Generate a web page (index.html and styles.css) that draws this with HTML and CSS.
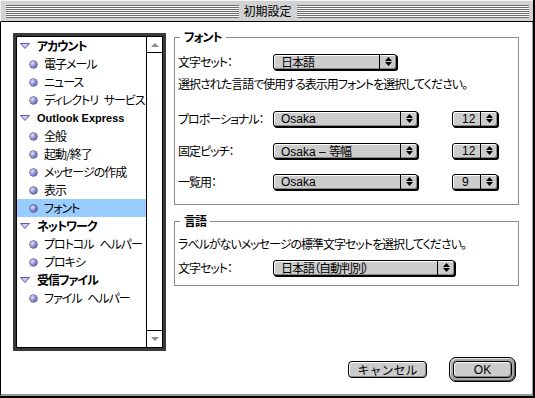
FILE: index.html
```html
<!DOCTYPE html>
<html>
<head>
    <meta charset="UTF-8">
    <title>初期設定</title>
    <link rel="stylesheet" href="styles.css">
</head>
<body>
<div class="window">
    <div class="titlebar">
        <div class="stripes"></div>
        <span class="title">初期設定</span>
        <div class="stripes"></div>
    </div>

    <div class="content">
        <div class="main">
            <div class="listbox">
                <ul class="tree">
                    <li class="head"><svg class="twisty" width="10" height="6" viewBox="0 0 10 6"><polygon points="0.5,0.5 9.5,0.5 5,5.5" fill="#c8c8f0" stroke="#5a5aaa"/></svg>アカウント</li>
                    <li class="leaf"><span class="dot"></span>電子メール</li>
                    <li class="leaf"><span class="dot"></span>ニュース</li>
                    <li class="leaf"><span class="dot"></span>ディレクトリ サービス</li>
                    <li class="head latin"><svg class="twisty" width="10" height="6" viewBox="0 0 10 6"><polygon points="0.5,0.5 9.5,0.5 5,5.5" fill="#c8c8f0" stroke="#5a5aaa"/></svg>Outlook Express</li>
                    <li class="leaf"><span class="dot"></span>全般</li>
                    <li class="leaf"><span class="dot"></span>起動/終了</li>
                    <li class="leaf"><span class="dot"></span>メッセージの作成</li>
                    <li class="leaf"><span class="dot"></span>表示</li>
                    <li class="leaf selected"><span class="dot"></span>フォント</li>
                    <li class="head"><svg class="twisty" width="10" height="6" viewBox="0 0 10 6"><polygon points="0.5,0.5 9.5,0.5 5,5.5" fill="#c8c8f0" stroke="#5a5aaa"/></svg>ネットワーク</li>
                    <li class="leaf"><span class="dot"></span>プロトコル ヘルパー</li>
                    <li class="leaf"><span class="dot"></span>プロキシ</li>
                    <li class="head"><svg class="twisty" width="10" height="6" viewBox="0 0 10 6"><polygon points="0.5,0.5 9.5,0.5 5,5.5" fill="#c8c8f0" stroke="#5a5aaa"/></svg>受信ファイル</li>
                    <li class="leaf"><span class="dot"></span>ファイル ヘルパー</li>
                </ul>
                <div class="scrollbar">
                    <div class="arrow up"><svg width="8" height="4" viewBox="0 0 8 4"><polygon points="4,0 8,4 0,4" fill="#8a8a8a"/></svg></div>
                    <div class="track"></div>
                    <div class="arrow down"><svg width="8" height="4" viewBox="0 0 8 4"><polygon points="0,0 8,0 4,4" fill="#8a8a8a"/></svg></div>
                </div>
            </div>

            <div class="panels">
                <fieldset class="group">
                    <legend>フォント</legend>
                    <div class="field first">
                        <span class="lbl">文字セット：</span>
                        <div class="popup w-charset"><span class="val">日本語</span><span class="arr"><svg width="7" height="9" viewBox="0 0 7 9"><polygon points="3.5,0 7,4 0,4" fill="#000"/><polygon points="0,5 7,5 3.5,9" fill="#000"/></svg></span></div>
                    </div>
                    <p class="desc">選択された言語で使用する表示用フォントを選択してください。</p>
                    <div class="field gap-a">
                        <span class="lbl">プロポーショナル：</span>
                        <div class="popup w-font"><span class="val latin">Osaka</span><span class="arr"><svg width="7" height="9" viewBox="0 0 7 9"><polygon points="3.5,0 7,4 0,4" fill="#000"/><polygon points="0,5 7,5 3.5,9" fill="#000"/></svg></span></div>
                        <div class="popup w-size"><span class="val latin">12</span><span class="arr"><svg width="7" height="9" viewBox="0 0 7 9"><polygon points="3.5,0 7,4 0,4" fill="#000"/><polygon points="0,5 7,5 3.5,9" fill="#000"/></svg></span></div>
                    </div>
                    <div class="field gap-b">
                        <span class="lbl">固定ピッチ：</span>
                        <div class="popup w-font"><span class="val"><span class="latin">Osaka – </span>等幅</span><span class="arr"><svg width="7" height="9" viewBox="0 0 7 9"><polygon points="3.5,0 7,4 0,4" fill="#000"/><polygon points="0,5 7,5 3.5,9" fill="#000"/></svg></span></div>
                        <div class="popup w-size"><span class="val latin">12</span><span class="arr"><svg width="7" height="9" viewBox="0 0 7 9"><polygon points="3.5,0 7,4 0,4" fill="#000"/><polygon points="0,5 7,5 3.5,9" fill="#000"/></svg></span></div>
                    </div>
                    <div class="field gap-c">
                        <span class="lbl">一覧用：</span>
                        <div class="popup w-font"><span class="val latin">Osaka</span><span class="arr"><svg width="7" height="9" viewBox="0 0 7 9"><polygon points="3.5,0 7,4 0,4" fill="#000"/><polygon points="0,5 7,5 3.5,9" fill="#000"/></svg></span></div>
                        <div class="popup w-size"><span class="val latin">9</span><span class="arr"><svg width="7" height="9" viewBox="0 0 7 9"><polygon points="3.5,0 7,4 0,4" fill="#000"/><polygon points="0,5 7,5 3.5,9" fill="#000"/></svg></span></div>
                    </div>
                </fieldset>

                <fieldset class="group lang">
                    <legend>言語</legend>
                    <p class="desc">ラベルがないメッセージの標準文字セットを選択してください。</p>
                    <div class="field gap-d">
                        <span class="lbl">文字セット：</span>
                        <div class="popup w-auto"><span class="val">日本語（自動判別）</span><span class="arr"><svg width="7" height="9" viewBox="0 0 7 9"><polygon points="3.5,0 7,4 0,4" fill="#000"/><polygon points="0,5 7,5 3.5,9" fill="#000"/></svg></span></div>
                    </div>
                </fieldset>
            </div>
        </div>

        <div class="buttons">
            <button class="btn cancel">キャンセル</button>
            <div class="ring"><button class="btn ok">OK</button></div>
        </div>
    </div>
</div>
</body>
</html>
```

FILE: styles.css
```css
* {
    box-sizing: border-box;
}
body {
    margin: 0;
    background-color: #fff;
    font-family: "Noto Sans CJK JP", sans-serif;
    font-size: 12px;
    line-height: 16px;
    letter-spacing: -1px;
    color: #000;
    font-feature-settings: "palt";
}
.latin {
    font-family: "Liberation Sans", "Noto Sans CJK JP", sans-serif;
    letter-spacing: 0;
}

.window {
    width: 535px;
    height: 398px;
    display: flex;
    flex-direction: column;
    border-right: 2px solid #000;
    border-bottom: 2px solid #000;
    background-color: #fff;
}

/* title bar */
.titlebar {
    height: 22px;
    flex-shrink: 0;
    display: flex;
    align-items: center;
    padding: 0 4px 0 5px;
    background-color: #d2d2d2;
    border-top: 1px solid #f2f2f2;
    border-left: 1px solid #f2f2f2;
    border-bottom: 1px solid #000;
}
.stripes {
    flex: 1;
    height: 13px;
    background: repeating-linear-gradient(to bottom, #6e6e6e 0 1px, #fafafa 1px 2px);
}
.title {
    padding: 0 5px;
    line-height: 14px;
    letter-spacing: 0;
}

.content {
    flex: 1;
    display: flex;
    flex-direction: column;
    border-left: 1px solid #000;
    border-right: 1px solid #999;
    border-bottom: 2px solid #999;
}
.main {
    display: flex;
    align-items: flex-start;
    padding-left: 12px;
}

/* list on the left */
.listbox {
    margin-top: 11px;
    width: 153px;
    height: 318px;
    display: flex;
    border: 3px solid #3a3a3a;
    padding: 1px;
    box-shadow: inset 0 0 0 1px #000;
}
.tree {
    flex: 1;
    list-style: none;
    margin: 0;
    padding: 0;
    word-spacing: 4px;
}
.tree li {
    height: 18px;
    display: flex;
    align-items: center;
    white-space: nowrap;
}
.tree .head {
    padding-left: 3px;
    font-weight: bold;
}
.tree .head.latin {
    font-size: 11px;
    word-spacing: 0;
}
.twisty {
    margin-right: 7px;
    flex-shrink: 0;
}
.tree .leaf {
    padding-left: 13px;
}
.dot {
    width: 7px;
    height: 7px;
    margin-right: 7px;
    border-radius: 50%;
    flex-shrink: 0;
    background: radial-gradient(circle at 35% 35%, #e4e4ff 0, #8c8ce0 45%, #34347a 100%);
    box-shadow: 0 0 0 0.5px #222;
}
.tree .selected {
    background-color: #99ccff;
}
.scrollbar {
    width: 16px;
    display: flex;
    flex-direction: column;
    border-left: 1px solid #000;
}
.arrow {
    height: 16px;
    display: flex;
    align-items: center;
    justify-content: center;
}
.arrow.up {
    border-bottom: 1px solid #000;
}
.arrow.down {
    height: 17px;
    border-top: 1px solid #000;
}
.track {
    flex: 1;
}

/* group boxes */
.panels {
    margin-left: 8px;
    margin-top: 7px;
    width: 345px;
}
.group {
    margin: 0;
    min-width: 0;
    padding: 0 3px 14px;
    border: 1px solid #8c8c8c;
}
.group.lang {
    margin-top: 8px;
    padding-bottom: 9px;
}
.group legend {
    margin-left: 2px;
    padding: 0 4px;
    font-weight: bold;
    line-height: 16px;
}
.desc {
    margin: 6px 0 0;
}
.lang .desc {
    margin-top: 7px;
}
.field {
    display: flex;
    align-items: center;
    height: 17px;
}
.field.first {
    margin-top: 8px;
}
.field.gap-a {
    margin-top: 18px;
}
.field.gap-b {
    margin-top: 15px;
}
.field.gap-c {
    margin-top: 14px;
}
.field.gap-d {
    margin-top: 7px;
}
.lbl {
    width: 95px;
    flex-shrink: 0;
}

/* popup menus */
.popup {
    height: 16px;
    display: flex;
    border: 1px solid #000;
    border-radius: 3px;
    background-color: #cccccc;
    box-shadow: 1px 1px 0 #000, inset 1px 1px 0 #fff, inset -1px -1px 0 #888;
}
.popup .val {
    flex: 1;
    padding-left: 7px;
    line-height: 14px;
    white-space: nowrap;
}
.popup .arr {
    width: 17px;
    display: flex;
    align-items: center;
    justify-content: center;
    border-left: 1px solid #000;
}
.w-charset {
    width: 124px;
}
.w-font {
    width: 145px;
}
.w-size {
    width: 46px;
    margin-left: 34px;
}
.w-size .val {
    padding-left: 9px;
}
.w-auto {
    width: 182px;
}

/* buttons */
.buttons {
    display: flex;
    justify-content: flex-end;
    align-items: center;
    gap: 22px;
    margin-top: 6px;
    padding-right: 16px;
}
.btn {
    height: 17px;
    padding: 0;
    font-family: "Noto Sans CJK JP", sans-serif;
    font-size: 12px;
    line-height: 14px;
    color: #000;
    border: 1px solid #000;
    border-radius: 4px;
    background-color: #cccccc;
    box-shadow: inset 1px 1px 0 #fff, inset -1px -1px 0 #888;
}
.cancel {
    width: 79px;
    letter-spacing: 0;
}
.ring {
    padding: 3px;
    border: 1px solid #000;
    border-radius: 7px;
    background-color: #a8a8a8;
    box-shadow: inset 1px 1px 0 #e0e0e0, inset -1px -1px 0 #555;
}
.ok {
    display: block;
    width: 59px;
    font-family: "Liberation Sans", sans-serif;
}
```
